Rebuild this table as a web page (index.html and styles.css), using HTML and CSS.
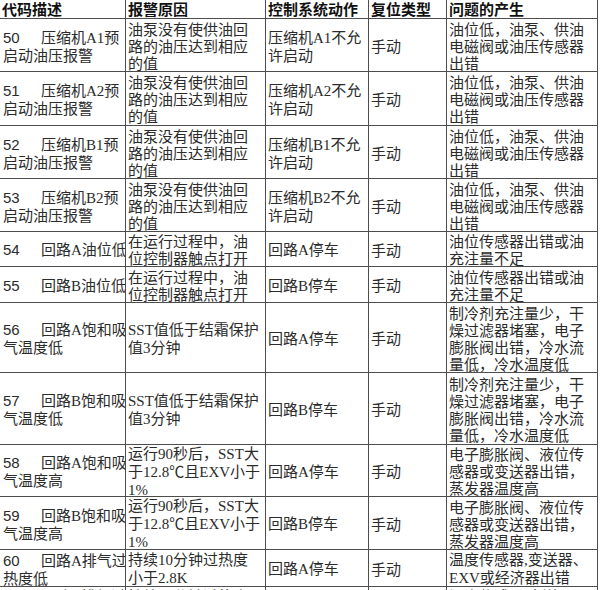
FILE: index.html
```html
<!DOCTYPE html>
<html lang="zh-CN">
<head>
<meta charset="utf-8">
<title>报警代码表</title>
<link rel="stylesheet" href="styles.css">
</head>
<body>
<div class="grid">
  <div class="c h"><div>代码描述</div></div>
  <div class="c h"><div>报警原因</div></div>
  <div class="c h"><div>控制系统动作</div></div>
  <div class="c h"><div>复位类型</div></div>
  <div class="c h"><div>问题的产生</div></div>

  <div class="c first"><div><span class="n">50</span>压缩机<span class="e">A1</span>预<br>启动油压报警</div></div>
  <div class="c"><div>油泵没有使供油回<br>路的油压达到相应<br>的值</div></div>
  <div class="c"><div>压缩机<span class="e">A1</span>不允<br>许启动</div></div>
  <div class="c"><div>手动</div></div>
  <div class="c"><div>油位低，油泵、供油<br>电磁阀或油压传感器<br>出错</div></div>

  <div class="c first"><div><span class="n">51</span>压缩机<span class="e">A2</span>预<br>启动油压报警</div></div>
  <div class="c"><div>油泵没有使供油回<br>路的油压达到相应<br>的值</div></div>
  <div class="c"><div>压缩机<span class="e">A2</span>不允<br>许启动</div></div>
  <div class="c"><div>手动</div></div>
  <div class="c"><div>油位低，油泵、供油<br>电磁阀或油压传感器<br>出错</div></div>

  <div class="c first"><div><span class="n">52</span>压缩机<span class="e">B1</span>预<br>启动油压报警</div></div>
  <div class="c"><div>油泵没有使供油回<br>路的油压达到相应<br>的值</div></div>
  <div class="c"><div>压缩机<span class="e">B1</span>不允<br>许启动</div></div>
  <div class="c"><div>手动</div></div>
  <div class="c"><div>油位低，油泵、供油<br>电磁阀或油压传感器<br>出错</div></div>

  <div class="c first"><div><span class="n">53</span>压缩机<span class="e">B2</span>预<br>启动油压报警</div></div>
  <div class="c"><div>油泵没有使供油回<br>路的油压达到相应<br>的值</div></div>
  <div class="c"><div>压缩机<span class="e">B2</span>不允<br>许启动</div></div>
  <div class="c"><div>手动</div></div>
  <div class="c"><div>油位低，油泵、供油<br>电磁阀或油压传感器<br>出错</div></div>

  <div class="c first"><div><span class="n">54</span>回路<span class="e">A</span>油位低</div></div>
  <div class="c"><div>在运行过程中，油<br>位控制器触点打开</div></div>
  <div class="c"><div>回路<span class="e">A</span>停车</div></div>
  <div class="c"><div>手动</div></div>
  <div class="c"><div>油位传感器出错或油<br>充注量不足</div></div>

  <div class="c first"><div><span class="n">55</span>回路<span class="e">B</span>油位低</div></div>
  <div class="c"><div>在运行过程中，油<br>位控制器触点打开</div></div>
  <div class="c"><div>回路<span class="e">B</span>停车</div></div>
  <div class="c"><div>手动</div></div>
  <div class="c"><div>油位传感器出错或油<br>充注量不足</div></div>

  <div class="c first"><div><span class="n">56</span>回路<span class="e">A</span>饱和吸<br>气温度低</div></div>
  <div class="c"><div><span class="e">SST</span>值低于结霜保护<br>值<span class="e">3</span>分钟</div></div>
  <div class="c"><div>回路<span class="e">A</span>停车</div></div>
  <div class="c"><div>手动</div></div>
  <div class="c"><div>制冷剂充注量少，干<br>燥过滤器堵塞，电子<br>膨胀阀出错，冷水流<br>量低，冷水温度低</div></div>

  <div class="c first"><div><span class="n">57</span>回路<span class="e">B</span>饱和吸<br>气温度低</div></div>
  <div class="c"><div><span class="e">SST</span>值低于结霜保护<br>值<span class="e">3</span>分钟</div></div>
  <div class="c"><div>回路<span class="e">B</span>停车</div></div>
  <div class="c"><div>手动</div></div>
  <div class="c"><div>制冷剂充注量少，干<br>燥过滤器堵塞，电子<br>膨胀阀出错，冷水流<br>量低，冷水温度低</div></div>

  <div class="c first"><div><span class="n">58</span>回路<span class="e">A</span>饱和吸<br>气温度高</div></div>
  <div class="c"><div>运行<span class="e">90</span>秒后，<span class="e">SST</span>大<br>于<span class="e">12.8</span>℃且<span class="e">EXV</span>小于<br><span class="e">1%</span></div></div>
  <div class="c"><div>回路<span class="e">A</span>停车</div></div>
  <div class="c"><div>手动</div></div>
  <div class="c"><div>电子膨胀阀、液位传<br>感器或变送器出错，<br>蒸发器温度高</div></div>

  <div class="c first"><div><span class="n">59</span>回路<span class="e">B</span>饱和吸<br>气温度高</div></div>
  <div class="c"><div>运行<span class="e">90</span>秒后，<span class="e">SST</span>大<br>于<span class="e">12.8</span>℃且<span class="e">EXV</span>小于<br><span class="e">1%</span></div></div>
  <div class="c"><div>回路<span class="e">B</span>停车</div></div>
  <div class="c"><div>手动</div></div>
  <div class="c"><div>电子膨胀阀、液位传<br>感器或变送器出错，<br>蒸发器温度高</div></div>

  <div class="c first"><div><span class="n">60</span>回路<span class="e">A</span>排气过<br>热度低</div></div>
  <div class="c"><div>持续<span class="e">10</span>分钟过热度<br>小于<span class="e">2.8K</span></div></div>
  <div class="c"><div>回路<span class="e">A</span>停车</div></div>
  <div class="c"><div>手动</div></div>
  <div class="c"><div>温度传感器<span class="e">,</span>变送器、<br><span class="e">EXV</span>或经济器出错</div></div>

  <div class="c first top"><div><span class="n">61</span>回路<span class="e">B</span>排气过<br>热度低</div></div>
  <div class="c top"><div>持续<span class="e">10</span>分钟过热度<br>小于<span class="e">2.8K</span></div></div>
  <div class="c"><div>回路<span class="e">B</span>停车</div></div>
  <div class="c"><div>手动</div></div>
  <div class="c top"><div>温度传感器<span class="e">,</span>变送器、<br><span class="e">EXV</span>或经济器出错</div></div>
</div>
</body>
</html>
```

FILE: styles.css
```css
html, body {
  margin: 0;
  padding: 0;
  background: #ffffff;
  overflow: hidden;
}

body {
  font-family: "Noto Sans CJK SC", sans-serif;
  font-size: 15px;
  color: #2b2b2b;
}

.grid {
  display: grid;
  grid-template-columns: 125px 139px 102px 77px 150px;
  grid-template-rows: 18px 52px 53px 52px 52px 34px 35px 69px 71px 51px 52px 36px 52px;
  gap: 1px;
  padding: 1px;
  margin: -1px 0 0 -1px;
  width: max-content;
  background: #4d4d4d;
}

.c {
  background: #ffffff;
  display: flex;
  align-items: center;
  padding: 0 2px;
  overflow: hidden;
}

.c > div {
  white-space: nowrap;
  line-height: 17px;
}

.c.first {
  padding-left: 3px;
}

.c.top {
  align-items: flex-start;
}

.h > div {
  font-weight: 700;
  color: #111111;
  line-height: 18px;
}

.n {
  display: inline-block;
  width: 38px;
  line-height: 15px;
  font-family: "Liberation Sans", sans-serif;
}

.e {
  line-height: 15px;
  font-family: "Liberation Serif", serif;
}
```
